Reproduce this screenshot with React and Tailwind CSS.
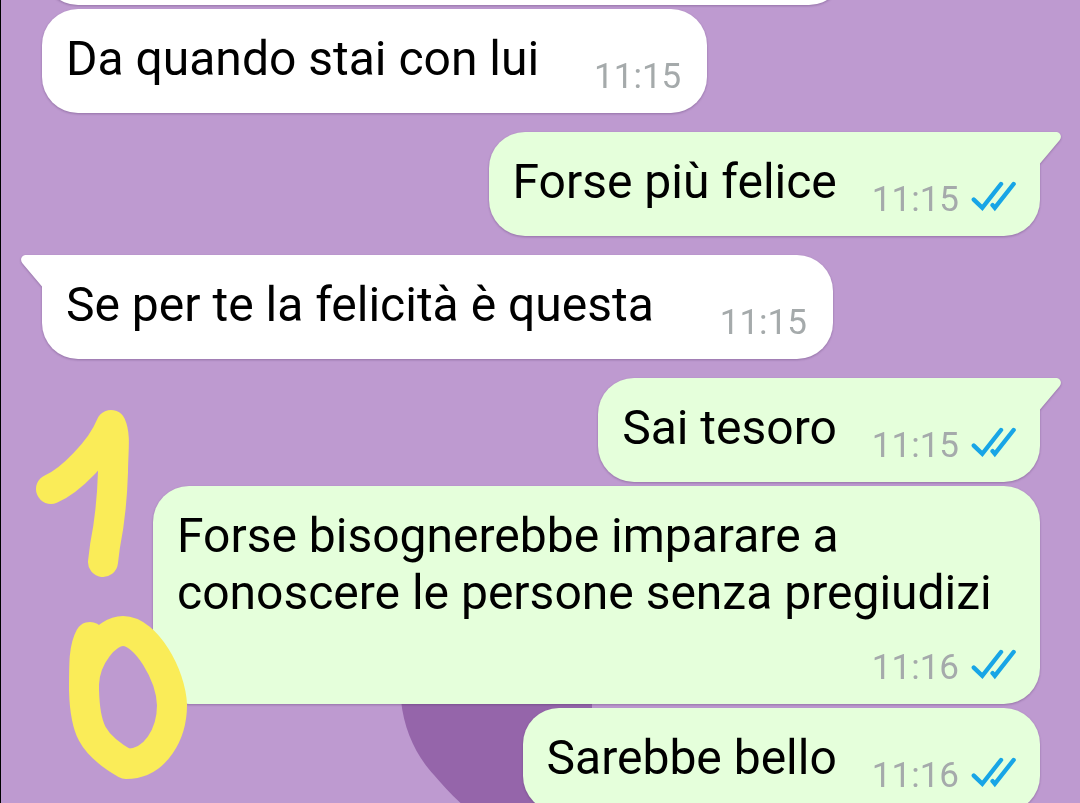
import React from "react";
import clsx from "clsx";

const messages = [
  { id: 1, text: "Da quando stai con lui", time: "11:15", gap: "gap-[55px]" },
  { id: 2, text: "Forse più felice", time: "11:15", mine: true, first: true, gap: "gap-[35px]" },
  { id: 3, text: "Se per te la felicità è questa", time: "11:15", first: true, gap: "gap-[66px]" },
  { id: 4, text: "Sai tesoro", time: "11:15", mine: true, first: true, gap: "gap-[35px]" },
  {
    id: 5,
    text: "Forse bisognerebbe imparare a conoscere le persone senza pregiudizi",
    time: "11:16",
    mine: true,
    long: true,
  },
  { id: 6, text: "Sarebbe bello", time: "11:16", mine: true, gap: "gap-[35px]" },
];

const DoubleCheck = () => (
  <svg
    className="mb-2 h-8 w-[45px] shrink-0"
    viewBox="0 0 45 32"
    fill="none"
    stroke="#18a5e6"
    strokeWidth="4.4"
    strokeLinecap="round"
    role="img"
    aria-label="✓✓"
  >
    <path d="M2.8 19.6 L11.3 27.8 L30 4" />
    <path d="M21.6 25.2 L23.8 27.8 L42.6 4" />
  </svg>
);

const Tail = ({ mine }) => (
  <svg
    className={clsx(
      "absolute top-0 h-[34px] w-[22px]",
      mine ? "left-full -ml-px fill-[#e5ffdb]" : "right-full -mr-px -scale-x-100 fill-white"
    )}
    viewBox="0 0 22 34"
    aria-hidden="true"
  >
    <path d="M0 0 H17 C21.5 0 23.4 4.8 20.6 8.3 L1 31.5 V34 H0 Z" />
  </svg>
);

const Message = ({ message }) => {
  const { text, time, mine, first, long, gap } = message;
  return (
    <li
      className={clsx(
        "relative flex max-w-[887px] rounded-[36px] pl-6 drop-shadow-[0_1px_1px_rgba(70,40,90,0.35)]",
        mine ? "self-end bg-[#e5ffdb] pr-6" : "self-start bg-white pr-[26px]",
        first && (mine ? "mt-[19px] rounded-tr-none" : "mt-[19px] rounded-tl-none"),
        !first && "mt-1",
        long ? "flex-col" : "items-end",
        gap
      )}
    >
      {first && <Tail mine={mine} />}
      <p className={clsx("pt-[21px] text-5xl leading-[57px]", long ? "pb-[27px]" : "pb-[26px]")}>{text}</p>
      <div className="flex shrink-0 items-end gap-3 self-end pb-4">
        <time className="text-[35px] leading-10 text-[#a5aaab]">{time}</time>
        {mine && <DoubleCheck />}
      </div>
    </li>
  );
};

const Wallpaper = () => (
  <svg className="absolute -left-px top-0 h-[803px] w-[1080px]" viewBox="0 0 1080 803" aria-hidden="true">
    <path d="M401 700 C404 732 418 758 434 775 C443 785 452 796 464 806 H592 V700 Z" fill="#9565aa" />
  </svg>
);

// finger-drawn numbers over the chat
const Scribble = () => (
  <svg
    className="pointer-events-none absolute -left-px top-0 h-[803px] w-[220px]"
    viewBox="0 0 220 803"
    fill="none"
    stroke="#faec58"
    strokeWidth="30"
    strokeLinecap="round"
    strokeLinejoin="round"
    aria-hidden="true"
  >
    <path d="M51 489 C70 481 101 450 111 425 C116 436 113 452 113 472 C112 504 109 526 105 546 L103 562" />
    <path d="M90 637 C84 648 84 662 84 690 C85 728 91 744 126 764 C156 764 172 733 172 705 C171 675 146 631 123 631 C106 631 85 657 84 684" />
  </svg>
);

const App = () => {
  return (
    <main className="relative h-screen overflow-hidden border-l border-black bg-[#be9ad0] font-[Roboto,sans-serif] text-black">
      <Wallpaper />
      <ul className="relative -mt-[99px] flex flex-col pl-[41px] pr-10">
        {/* previous message, scrolled out of view */}
        <li className="h-[104px] w-[803px] self-start rounded-[36px] bg-white drop-shadow-[0_1px_1px_rgba(70,40,90,0.35)]" />
        {messages.map((message) => (
          <Message key={message.id} message={message} />
        ))}
      </ul>
      <Scribble />
    </main>
  );
};

export default App;
